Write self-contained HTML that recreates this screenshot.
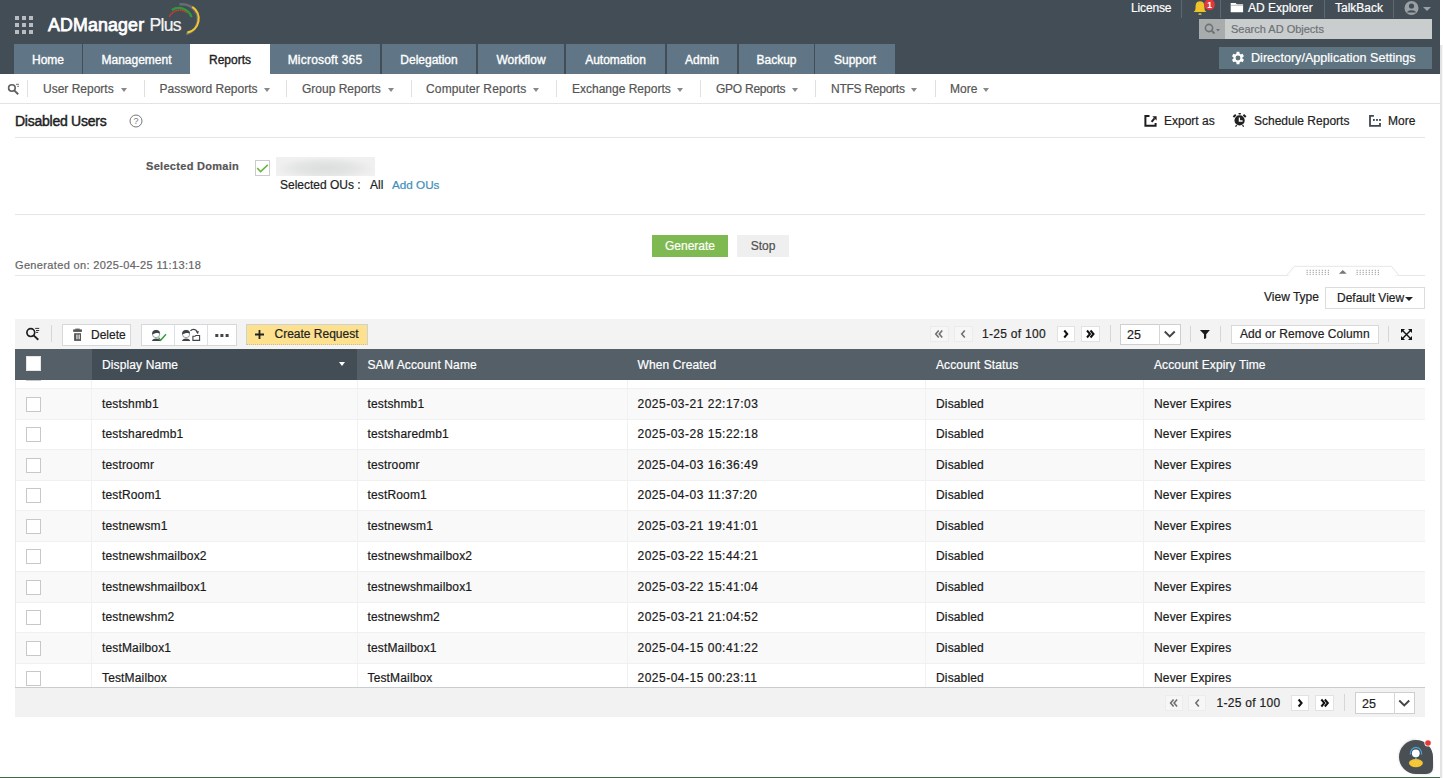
<!DOCTYPE html>
<html><head><meta charset="utf-8">
<style>
*{box-sizing:border-box;margin:0;padding:0}
html,body{width:1443px;height:778px;overflow:hidden;background:#fff;font-family:"Liberation Sans",sans-serif;font-size:12px;color:#222;-webkit-text-stroke-width:0.2px}
.a{position:absolute;white-space:nowrap}
#hdr{position:absolute;left:0;top:0;width:1440px;height:74px;background:#424d56}
.tab{position:absolute;top:44px;height:30px;background:#607686;color:#fff;font-size:12px;line-height:32px;text-align:center;-webkit-text-stroke-width:0.35px}
.tab.sel{background:#fff;color:#222}
.sub{position:absolute;top:74px;left:0;width:1440px;height:30px;border-bottom:1px solid #e3e3e3;background:#fff}
.sn{position:absolute;top:0;line-height:29px;color:#555;font-size:12px}
.car{position:absolute;width:0;height:0;border-left:3px solid transparent;border-right:3px solid transparent;border-top:4px solid #888}
.vsep{position:absolute;width:1px;background:#e0e0e0}
.hl{position:absolute;height:1px;background:#e6e6e6}
.tb{position:absolute;left:15px;top:319px;width:1410px;height:30px;background:#f3f3f3}
.btn{position:absolute;background:#fff;border:1px solid #d9d9d9}
.th{position:absolute;top:349px;height:31px;background:#555f68;color:#fff;line-height:30px;font-size:12px}
.row{position:absolute;left:0;width:1410px;height:30.52px;border-bottom:1px solid #f0f0f0}
.row span{position:absolute;top:0;line-height:30px;font-size:12px;color:#1a1a1a}
.cb{position:absolute;width:15px;height:15px;border:1px solid #c8c8c8;background:#fff}
.pg{position:absolute;width:19px;height:15px;border:1px solid #e3e3e3;background:#fff}
</style></head><body>

<div id="hdr">
  <!-- grid icon -->
  <svg class="a" style="left:15px;top:16px" width="19" height="19" viewBox="0 0 19 19">
    <g fill="#b9bdc0">
      <rect x="0" y="0" width="4" height="4"/><rect x="7" y="0" width="4" height="4"/><rect x="14" y="0" width="4" height="4"/>
      <rect x="0" y="7" width="4" height="4"/><rect x="7" y="7" width="4" height="4"/><rect x="14" y="7" width="4" height="4"/>
      <rect x="0" y="14" width="4" height="4"/><rect x="7" y="14" width="4" height="4"/><rect x="14" y="14" width="4" height="4"/>
    </g>
  </svg>
  <div class="a" style="left:48px;top:14px;font-size:17.8px;line-height:22px;color:#fff;-webkit-text-stroke-width:0.75px;letter-spacing:0.15px">ADManager</div>
  <div class="a" style="left:149.5px;top:14px;font-size:17.6px;line-height:22px;color:#f4f4f4;letter-spacing:-0.7px">Plus</div>
  <svg class="a" style="left:0;top:0" width="210" height="40" viewBox="0 0 210 40">
    <path d="M179.5 4.6 A15 15 0 0 1 186 34" fill="none" stroke="#666d73" stroke-width="2.6"/>
    <path d="M192.3 6.8 A14.2 14.2 0 0 1 187.3 32.6" fill="none" stroke="#f2c72c" stroke-width="2.1"/>
    <path d="M171.8 10 A13.5 13.5 0 0 1 191.6 17.2" fill="none" stroke="#2f9a3a" stroke-width="2.2"/>
    <path d="M169.3 16.8 A11.5 11.5 0 0 1 186.8 12.6" fill="none" stroke="#e23a2e" stroke-width="1.4" stroke-dasharray="1.6 0.5"/>
  </svg>

  <!-- top right links -->
  <div class="a" style="left:1131px;top:0;line-height:16px;color:#fff;font-size:12px;letter-spacing:-0.15px">License</div>
  <div class="vsep" style="left:1181px;top:0;height:17.5px;background:#5d6870"></div>
  <svg class="a" style="left:1185px;top:0px" width="35" height="20" viewBox="1185 0 35 20">
    <path d="M1200 1.2 C1196.3 1.2 1195.6 4 1195.6 7 L1195.3 10 L1193.8 11.9 L1206.2 11.9 L1204.7 10 L1204.4 7 C1204.4 4 1203.7 1.2 1200 1.2Z" fill="#efc42a"/>
    <rect x="1198.6" y="13.2" width="2.8" height="1.8" fill="#c9b03a"/>
    <circle cx="1209.5" cy="4.6" r="5.4" fill="#e2373c"/>
    <text x="1209.6" y="8" font-size="8.5" font-weight="bold" text-anchor="middle" fill="#fff" font-family="Liberation Sans">1</text>
  </svg>
  <div class="vsep" style="left:1220px;top:0;height:17.5px;background:#5d6870"></div>
  <svg class="a" style="left:1230px;top:2px" width="14" height="11" viewBox="0 0 14 11">
    <path d="M0.7 1 L5.5 1 L6.8 2.3 L13.1 2.3 L13.1 10.2 L0.7 10.2Z" fill="#fff"/><path d="M0.7 3.3 L13.1 3.3" stroke="#8a9094" stroke-width="0.6"/>
  </svg>
  <div class="a" style="left:1248px;top:0;line-height:16px;color:#fff;font-size:12px">AD Explorer</div>
  <div class="vsep" style="left:1324px;top:0;height:17.5px;background:#5d6870"></div>
  <div class="a" style="left:1335px;top:0;line-height:16px;color:#fff;font-size:12px">TalkBack</div>
  <div class="vsep" style="left:1393px;top:0;height:17.5px;background:#5d6870"></div>
  <svg class="a" style="left:1404px;top:1px" width="28" height="15" viewBox="0 0 28 15">
    <circle cx="7.5" cy="7" r="7" fill="#9aa0a4"/>
    <circle cx="7.5" cy="5" r="2.6" fill="#424d56"/>
    <path d="M3 11.5 C4 8.5 11 8.5 12 11.5 Z" fill="#424d56"/>
    <path d="M19 6 L27 6 L23 10Z" fill="#9aa0a4"/>
  </svg>

  <!-- search -->
  <div class="a" style="left:1199px;top:19px;width:26px;height:20px;background:#a8acad"></div>
  <svg class="a" style="left:1204px;top:23px" width="18" height="12" viewBox="0 0 18 12">
    <circle cx="5" cy="5" r="3.6" fill="none" stroke="#6c7175" stroke-width="1.6"/>
    <path d="M7.6 7.6 L10.5 10.5" stroke="#6c7175" stroke-width="1.8"/>
    <path d="M12 6 L16 6 L14 8.5Z" fill="#6c7175"/>
  </svg>
  <div class="a" style="left:1225px;top:19px;width:207px;height:20px;background:#c9cdcd"></div>
  <div class="a" style="left:1231px;top:19px;line-height:20px;color:#6d7276;font-size:11px">Search AD Objects</div>

  <!-- settings button -->
  <div class="a" style="left:1219px;top:47px;width:213px;height:22px;background:#5f7481"></div>
  <svg class="a" style="left:1231px;top:51px" width="14" height="14" viewBox="2 2 20 20">
    <path fill="#fff" d="M19.4 13a7.5 7.5 0 0 0 0-2l2.1-1.6-2-3.5-2.5 1a7.3 7.3 0 0 0-1.7-1L15 3h-4l-.4 2.9a7.3 7.3 0 0 0-1.7 1l-2.5-1-2 3.5L6.5 11a7.5 7.5 0 0 0 0 2l-2.1 1.6 2 3.5 2.5-1a7.3 7.3 0 0 0 1.7 1L11 21h4l.4-2.9a7.3 7.3 0 0 0 1.7-1l2.5 1 2-3.5zM13 15.5a3.5 3.5 0 1 1 0-7 3.5 3.5 0 0 1 0 7z" transform="translate(-1 0)"/>
  </svg>
  <div class="a" style="left:1251px;top:47px;line-height:22px;color:#fff;font-size:12.6px">Directory/Application Settings</div>

  <!-- tabs -->
  <div class="tab" style="left:14px;width:68px">Home</div>
  <div class="tab" style="left:83px;width:107px">Management</div>
  <div class="tab sel" style="left:190px;width:80px">Reports</div>
  <div class="tab" style="left:270px;width:110px;letter-spacing:0.2px">Microsoft 365</div>
  <div class="tab" style="left:382px;width:94px">Delegation</div>
  <div class="tab" style="left:478px;width:86px">Workflow</div>
  <div class="tab" style="left:566px;width:99px">Automation</div>
  <div class="tab" style="left:667px;width:70px">Admin</div>
  <div class="tab" style="left:739px;width:75px">Backup</div>
  <div class="tab" style="left:815px;width:80px">Support</div>
</div>

<!-- right strip -->
<div class="a" style="left:1440px;top:45px;width:1px;height:733px;background:#e2e2e2"></div>

<!-- sub nav -->
<div class="sub">
  <svg class="a" style="left:0;top:0" width="24" height="30" viewBox="0 74 24 30">
    <circle cx="11.9" cy="88" r="3.3" fill="none" stroke="#5f5f5f" stroke-width="1.6"/>
    <path d="M14.4 90.6 L18.2 94.2" stroke="#5f5f5f" stroke-width="1.9"/>
    <path d="M16 84.3 L19 84.3 M17.2 86.3 L19 86.3" stroke="#5f5f5f" stroke-width="0.9"/>
  </svg>
</div>
<div class="vsep" style="left:27px;top:80px;height:17px"></div>
<div class="sn" style="left:43px;top:75px;letter-spacing:0px">User Reports</div>
<div class="car" style="left:121px;top:88px"></div>
<div class="vsep" style="left:143.5px;top:80px;height:17px"></div>
<div class="sn" style="left:159.5px;top:75px;letter-spacing:0px">Password Reports</div>
<div class="car" style="left:263.5px;top:88px"></div>
<div class="vsep" style="left:286px;top:80px;height:17px"></div>
<div class="sn" style="left:302px;top:75px;letter-spacing:0px">Group Reports</div>
<div class="car" style="left:388px;top:88px"></div>
<div class="vsep" style="left:411px;top:80px;height:17px"></div>
<div class="sn" style="left:426px;top:75px;letter-spacing:0.15px">Computer Reports</div>
<div class="car" style="left:533px;top:88px"></div>
<div class="vsep" style="left:556px;top:80px;height:17px"></div>
<div class="sn" style="left:572px;top:75px;letter-spacing:0px">Exchange Reports</div>
<div class="car" style="left:677px;top:88px"></div>
<div class="vsep" style="left:700px;top:80px;height:17px"></div>
<div class="sn" style="left:716px;top:75px;letter-spacing:-0.25px">GPO Reports</div>
<div class="car" style="left:792px;top:88px"></div>
<div class="vsep" style="left:815px;top:80px;height:17px"></div>
<div class="sn" style="left:831px;top:75px;letter-spacing:-0.25px">NTFS Reports</div>
<div class="car" style="left:911px;top:88px"></div>
<div class="vsep" style="left:935px;top:80px;height:17px"></div>
<div class="sn" style="left:950px;top:75px;letter-spacing:0px">More</div>
<div class="car" style="left:983px;top:88px"></div>
<div class="a" style="left:15px;top:111px;font-size:14px;line-height:20px;color:#1e1e1e;-webkit-text-stroke:0.45px #1e1e1e;letter-spacing:-0.25px">Disabled Users</div>
<svg class="a" style="left:129px;top:114px" width="14" height="14" viewBox="0 0 14 14">
<circle cx="7" cy="7" r="6" fill="none" stroke="#777" stroke-width="1"/>
<text x="7" y="10.3" font-size="9" text-anchor="middle" fill="#777" font-family="Liberation Sans">?</text></svg>
<div class="hl" style="left:15px;top:137px;width:1410px"></div>
<svg class="a" style="left:1140px;top:110px" width="20" height="20" viewBox="1140 110 20 20">
<path d="M1149.5 116 L1145.4 116 L1145.4 125.7 L1155.6 125.7 L1155.6 123" fill="none" stroke="#1e1e1e" stroke-width="2"/>
<path d="M1151.6 121.8 L1154.5 118.3" stroke="#1e1e1e" stroke-width="2"/>
<path d="M1152.3 116.2 L1156.6 116.2 L1156.6 120.5Z" fill="#1e1e1e"/></svg>
<div class="a" style="left:1164px;top:112px;line-height:18px;font-size:12px;color:#222">Export as</div>
<svg class="a" style="left:1228px;top:108px" width="24" height="24" viewBox="1228 108 24 24">
<circle cx="1239.6" cy="120.4" r="5.1" fill="#222"/>
<rect x="1238.4" y="113" width="2.6" height="1.5" rx="0.7" fill="#222"/>
<path d="M1233.4 117 L1235.8 114.8 M1245.8 117 L1243.4 114.8" stroke="#222" stroke-width="2"/>
<path d="M1236.6 125 L1235.6 126.8 M1242.6 125 L1243.6 126.8" stroke="#222" stroke-width="1.3"/>
<path d="M1239.4 117.5 L1239.4 121 L1242.6 121" stroke="#fff" stroke-width="1.3" fill="none"/></svg>
<div class="a" style="left:1254px;top:112px;line-height:18px;font-size:12px;color:#222">Schedule Reports</div>
<svg class="a" style="left:1363px;top:110px" width="24" height="22" viewBox="1363 110 24 22">
<path d="M1373.9 115.9 L1370 115.9 L1370 125.9 L1380 125.9 L1380 123" fill="none" stroke="#3d4850" stroke-width="1.8"/>
<rect x="1373" y="119" width="1.8" height="1.9" fill="#3d4850"/><rect x="1376.1" y="119" width="1.8" height="1.9" fill="#3d4850"/><rect x="1379.1" y="119" width="1.8" height="1.9" fill="#3d4850"/></svg>
<div class="a" style="left:1388px;top:112px;line-height:18px;font-size:12px;color:#222">More</div>
<div class="a" style="left:146px;top:158px;line-height:16px;font-size:11px;font-weight:bold;color:#555;letter-spacing:0.3px">Selected Domain</div>
<div class="a" style="left:255px;top:160.3px;width:15.2px;height:15.3px;border:1px solid #c9cbcd;background:#fff"></div>
<svg class="a" style="left:250px;top:155px" width="25" height="25" viewBox="250 155 25 25"><path d="M257.2 168.1 L260.6 171.6 L267.8 164.9" fill="none" stroke="#6ab43e" stroke-width="1.5"/></svg>
<div class="a" style="left:276px;top:157.2px;width:99px;height:18.8px;background:radial-gradient(ellipse 50% 60% at 50% 60%, #dcdddd 0%, #e3e4e4 55%, #f0f0f0 100%)"></div>
<div class="a" style="left:280px;top:177px;line-height:16px;font-size:12px;color:#222">Selected OUs :</div>
<div class="a" style="left:370px;top:177px;line-height:16px;font-size:12px;color:#222">All</div>
<div class="a" style="left:392px;top:177px;line-height:16px;font-size:11.7px;color:#3d8fba">Add OUs</div>
<div class="hl" style="left:15px;top:214px;width:1410px"></div>
<div class="a" style="left:652px;top:235px;width:76px;height:22px;background:#7fb951;color:#fff;font-size:12px;line-height:22px;text-align:center">Generate</div>
<div class="a" style="left:737px;top:235px;width:52px;height:22px;background:#efefef;color:#505050;font-size:12px;line-height:22px;text-align:center">Stop</div>
<div class="a" style="left:15px;top:257px;line-height:16px;font-size:11px;color:#666;letter-spacing:0.35px">Generated on: 2025-04-25 11:13:18</div>
<div class="hl" style="left:15px;top:275px;width:1410px"></div>
<svg class="a" style="left:1280px;top:262px" width="125" height="16" viewBox="1280 262 125 16">
<path d="M1286.5 275.5 L1294.5 266.3 L1391.5 266.3 L1399 275.5" fill="#fff" stroke="#e6e6e6" stroke-width="1"/>
<rect x="1290" y="273" width="105" height="3.2" fill="#fff"/>
<g fill="#9a9a9a"><rect x="1306.60" y="269.8" width="1.1" height="1.1"/><rect x="1306.60" y="271.8" width="1.1" height="1.1"/><rect x="1306.60" y="273.8" width="1.1" height="1.1"/><rect x="1309.63" y="269.8" width="1.1" height="1.1"/><rect x="1309.63" y="271.8" width="1.1" height="1.1"/><rect x="1309.63" y="273.8" width="1.1" height="1.1"/><rect x="1312.66" y="269.8" width="1.1" height="1.1"/><rect x="1312.66" y="271.8" width="1.1" height="1.1"/><rect x="1312.66" y="273.8" width="1.1" height="1.1"/><rect x="1315.69" y="269.8" width="1.1" height="1.1"/><rect x="1315.69" y="271.8" width="1.1" height="1.1"/><rect x="1315.69" y="273.8" width="1.1" height="1.1"/><rect x="1318.72" y="269.8" width="1.1" height="1.1"/><rect x="1318.72" y="271.8" width="1.1" height="1.1"/><rect x="1318.72" y="273.8" width="1.1" height="1.1"/><rect x="1321.75" y="269.8" width="1.1" height="1.1"/><rect x="1321.75" y="271.8" width="1.1" height="1.1"/><rect x="1321.75" y="273.8" width="1.1" height="1.1"/><rect x="1324.78" y="269.8" width="1.1" height="1.1"/><rect x="1324.78" y="271.8" width="1.1" height="1.1"/><rect x="1324.78" y="273.8" width="1.1" height="1.1"/><rect x="1327.81" y="269.8" width="1.1" height="1.1"/><rect x="1327.81" y="271.8" width="1.1" height="1.1"/><rect x="1327.81" y="273.8" width="1.1" height="1.1"/><rect x="1356.60" y="269.8" width="1.1" height="1.1"/><rect x="1356.60" y="271.8" width="1.1" height="1.1"/><rect x="1356.60" y="273.8" width="1.1" height="1.1"/><rect x="1359.63" y="269.8" width="1.1" height="1.1"/><rect x="1359.63" y="271.8" width="1.1" height="1.1"/><rect x="1359.63" y="273.8" width="1.1" height="1.1"/><rect x="1362.66" y="269.8" width="1.1" height="1.1"/><rect x="1362.66" y="271.8" width="1.1" height="1.1"/><rect x="1362.66" y="273.8" width="1.1" height="1.1"/><rect x="1365.69" y="269.8" width="1.1" height="1.1"/><rect x="1365.69" y="271.8" width="1.1" height="1.1"/><rect x="1365.69" y="273.8" width="1.1" height="1.1"/><rect x="1368.72" y="269.8" width="1.1" height="1.1"/><rect x="1368.72" y="271.8" width="1.1" height="1.1"/><rect x="1368.72" y="273.8" width="1.1" height="1.1"/><rect x="1371.75" y="269.8" width="1.1" height="1.1"/><rect x="1371.75" y="271.8" width="1.1" height="1.1"/><rect x="1371.75" y="273.8" width="1.1" height="1.1"/><rect x="1374.78" y="269.8" width="1.1" height="1.1"/><rect x="1374.78" y="271.8" width="1.1" height="1.1"/><rect x="1374.78" y="273.8" width="1.1" height="1.1"/><rect x="1377.81" y="269.8" width="1.1" height="1.1"/><rect x="1377.81" y="271.8" width="1.1" height="1.1"/><rect x="1377.81" y="273.8" width="1.1" height="1.1"/></g><path d="M1338.9 273.8 L1342.8 270 L1346.7 273.8Z" fill="#777"/></svg>
<div class="a" style="left:1264px;top:289px;line-height:16px;font-size:12px;color:#222">View Type</div>
<div class="a" style="left:1325px;top:287px;width:100px;height:22px;border:1px solid #dcdcdc;background:#fff"></div>
<div class="a" style="left:1337px;top:290px;line-height:16px;font-size:12px;color:#222">Default View</div>
<div class="car" style="left:1405px;top:297px;border-left-width:4.5px;border-right-width:4.5px;border-top:4.5px solid #222"></div>
<div class="tb"></div>
<svg class="a" style="left:20px;top:322px" width="24" height="22" viewBox="20 322 24 22">
<circle cx="30.8" cy="332.6" r="3.9" fill="none" stroke="#1e1e1e" stroke-width="1.7"/>
<path d="M33.6 335.4 L38.3 339.8" stroke="#1e1e1e" stroke-width="1.9"/>
<path d="M35.2 328.4 L39.2 328.4 M36 330.5 L39.2 330.5 M36 332.4 L38.2 332.4" stroke="#1e1e1e" stroke-width="0.9"/></svg>
<div class="vsep" style="left:51px;top:325px;height:17px;background:#d6d6d6"></div>
<div class="btn" style="left:62px;top:324px;width:69px;height:22px;border-color:#d5d9dc"></div>
<svg class="a" style="left:70px;top:326px" width="14" height="16" viewBox="70 326 14 16">
<rect x="73.2" y="329.4" width="8.7" height="2.5" fill="#555"/><rect x="75.3" y="328.6" width="4.4" height="1.2" fill="#555"/>
<rect x="74.1" y="333.2" width="6.9" height="7.7" fill="#555"/>
<rect x="76.4" y="334.6" width="1.1" height="4.6" fill="#fff"/><rect x="78.6" y="334.6" width="1.1" height="4.6" fill="#fff"/></svg>
<div class="a" style="left:91px;top:327px;line-height:16px;font-size:12px;color:#222">Delete</div>
<div class="btn" style="left:140.5px;top:324px;width:96px;height:22px;border-color:#d5d9dc"></div>
<div class="vsep" style="left:173.5px;top:325px;height:20px;background:#dde0e2"></div>
<div class="vsep" style="left:206.5px;top:325px;height:20px;background:#dde0e2"></div>
<svg class="a" style="left:145px;top:324px" width="90" height="22" viewBox="145 324 90 22"><path d="M152.0 341 C152.0 337.6 160.2 337.6 160.2 341Z" fill="#3c444a"/><circle cx="156.1" cy="334" r="3.7" fill="#fff" stroke="#777" stroke-width="0.7"/><path d="M152.29999999999998 334.6 C151.9 331 154.1 330 156.1 330 C158.6 330 160.1 331.5 159.9 333.5 C157.6 332.3 154.6 333 152.29999999999998 334.6Z" fill="#3c444a"/>
<path d="M158.6 337.6 L160.6 340.3 L166 334.2" stroke="#2e9e3a" stroke-width="1.4" fill="none"/>
<path d="M182.0 341 C182.0 337.6 190.2 337.6 190.2 341Z" fill="#3c444a"/><circle cx="186.1" cy="334" r="3.7" fill="#fff" stroke="#777" stroke-width="0.7"/><path d="M182.29999999999998 334.6 C181.9 331 184.1 330 186.1 330 C188.6 330 190.1 331.5 189.9 333.5 C187.6 332.3 184.6 333 182.29999999999998 334.6Z" fill="#3c444a"/>
<path d="M190.5 330.8 C192 328.8 195.5 328.6 197.2 331.6" stroke="#3c444a" stroke-width="1.3" fill="none"/>
<path d="M195.6 331.6 L198.8 331 L198 334.3Z" fill="#3c444a"/>
<path d="M192.9 336.3 L195 336.3 L195.8 335.5 L199.6 335.5 L199.6 340.4 L192.9 340.4Z" fill="none" stroke="#3c444a" stroke-width="1.1"/>
<rect x="215.3" y="334" width="3" height="3" fill="#444"/><rect x="220.4" y="334" width="3" height="3" fill="#444"/><rect x="225.6" y="334" width="3" height="3" fill="#444"/>
</svg>
<div class="a" style="left:245.5px;top:324px;width:122px;height:20.5px;background:#fde18f;border:1px solid #cdd2d7;border-bottom:1px dotted #c8c0a0"></div>
<svg class="a" style="left:255px;top:330px" width="9" height="9" viewBox="0 0 9 9"><path d="M4.5 0 L4.5 9 M0 4.5 L9 4.5" stroke="#222" stroke-width="1.8"/></svg>
<div class="a" style="left:274.5px;top:326px;line-height:16px;font-size:12px;color:#222">Create Request</div>
<div class="a" style="left:930px;top:326px;width:18.5px;height:16px;background:#f6f6f6;border:1px solid #ececec"></div>
<svg class="a" style="left:0;top:0;overflow:visible" width="1" height="1"><path d="M938.75 330.5 L935.75 334 L938.75 337.5 M942.25 330.5 L939.25 334 L942.25 337.5" stroke="#707070" stroke-width="1.6" fill="none"/></svg>
<div class="a" style="left:954px;top:326px;width:18.5px;height:16px;background:#f6f6f6;border:1px solid #ececec"></div>
<svg class="a" style="left:0;top:0;overflow:visible" width="1" height="1"><path d="M964.75 330.5 L961.75 334 L964.75 337.5" stroke="#707070" stroke-width="1.6" fill="none"/></svg>
<div class="a" style="left:1056.5px;top:326px;width:18.5px;height:16px;background:#fff;border:1px solid #e2e2e2"></div>
<svg class="a" style="left:0;top:0;overflow:visible" width="1" height="1"><path d="M1064.25 330.5 L1067.25 334 L1064.25 337.5" stroke="#111" stroke-width="2" fill="none"/></svg>
<div class="a" style="left:1080.5px;top:326px;width:19.0px;height:16px;background:#fff;border:1px solid #e2e2e2"></div>
<svg class="a" style="left:0;top:0;overflow:visible" width="1" height="1"><path d="M1087.0 330.5 L1090.0 334 L1087.0 337.5 M1090.5 330.5 L1093.5 334 L1090.5 337.5" stroke="#111" stroke-width="2" fill="none"/></svg>
<div class="a" style="left:982px;top:326px;line-height:16px;font-size:12px;color:#222;letter-spacing:0.3px">1-25 of 100</div>
<div class="vsep" style="left:1110px;top:325px;height:17px;background:#d6d6d6"></div>
<div class="a" style="left:1120px;top:323.5px;width:60.5px;height:21.0px;background:#fff;border:1px solid #cfcfcf"></div>
<div class="vsep" style="left:1159px;top:323.5px;height:21.0px;background:#d6d6d6"></div>
<div class="a" style="left:1127px;top:323.5px;line-height:23.0px;font-size:12.5px;color:#222">25</div>
<svg class="a" style="left:0;top:0;overflow:visible" width="1" height="1"><path d="M1164.75 331.5 L1169.75 336.5 L1174.75 331.5" stroke="#444" stroke-width="1.9" fill="none"/></svg>
<div class="vsep" style="left:1190px;top:325.5px;height:16px;background:#d6d6d6"></div>
<svg class="a" style="left:1199px;top:329px" width="12" height="11" viewBox="1199 329 12 11"><path d="M1199.9 329.9 L1209.9 329.9 L1206.2 334.3 L1206.2 338.2 L1204 339 L1204 334.3Z" fill="#1a1a1a"/></svg>
<div class="vsep" style="left:1219.5px;top:325.5px;height:16px;background:#d6d6d6"></div>
<div class="btn" style="left:1230.5px;top:324.5px;width:148px;height:19px"></div>
<div class="a" style="left:1240px;top:326px;line-height:16px;font-size:12px;color:#222;letter-spacing:0.08px">Add or Remove Column</div>
<div class="vsep" style="left:1388px;top:325.5px;height:16px;background:#d6d6d6"></div>
<svg class="a" style="left:1400px;top:328px" width="14" height="14" viewBox="1400 328 14 14">
<path d="M1402.5 330.5 L1410.5 338.5 M1410.5 330.5 L1402.5 338.5" stroke="#111" stroke-width="1.4"/>
<path d="M1401 329 L1405 329 L1401 333Z M1412 329 L1408 329 L1412 333Z M1401 340 L1405 340 L1401 336Z M1412 340 L1408 340 L1412 336Z" fill="#111"/></svg>
<div class="a" style="left:15px;top:379.5px;width:1410px;height:308px;background:#fff;overflow:hidden">
<div class="row" style="left:0;top:-20.82px;background:#fff">
<div class="cb" style="left:11px;top:7.5px"></div>
</div>
<div class="row" style="left:0;top:9.70px;background:#f9f9f9">
<div class="cb" style="left:11px;top:7.5px"></div>
<span style="left:87.0px;top:-0.4px;line-height:30.52px;letter-spacing:0.15px">testshmb1</span>
<span style="left:352.5px;top:-0.4px;line-height:30.52px;letter-spacing:0.15px">testshmb1</span>
<span style="left:622.5px;top:-0.4px;line-height:30.52px;letter-spacing:0.5px">2025-03-21 22:17:03</span>
<span style="left:921.0px;top:-0.4px;line-height:30.52px;letter-spacing:0.15px">Disabled</span>
<span style="left:1139.0px;top:-0.4px;line-height:30.52px;letter-spacing:0.15px">Never Expires</span>
</div>
<div class="row" style="left:0;top:40.22px;background:#fff">
<div class="cb" style="left:11px;top:7.5px"></div>
<span style="left:87.0px;top:-0.4px;line-height:30.52px;letter-spacing:0.15px">testsharedmb1</span>
<span style="left:352.5px;top:-0.4px;line-height:30.52px;letter-spacing:0.15px">testsharedmb1</span>
<span style="left:622.5px;top:-0.4px;line-height:30.52px;letter-spacing:0.5px">2025-03-28 15:22:18</span>
<span style="left:921.0px;top:-0.4px;line-height:30.52px;letter-spacing:0.15px">Disabled</span>
<span style="left:1139.0px;top:-0.4px;line-height:30.52px;letter-spacing:0.15px">Never Expires</span>
</div>
<div class="row" style="left:0;top:70.74px;background:#f9f9f9">
<div class="cb" style="left:11px;top:7.5px"></div>
<span style="left:87.0px;top:-0.4px;line-height:30.52px;letter-spacing:0.15px">testroomr</span>
<span style="left:352.5px;top:-0.4px;line-height:30.52px;letter-spacing:0.15px">testroomr</span>
<span style="left:622.5px;top:-0.4px;line-height:30.52px;letter-spacing:0.5px">2025-04-03 16:36:49</span>
<span style="left:921.0px;top:-0.4px;line-height:30.52px;letter-spacing:0.15px">Disabled</span>
<span style="left:1139.0px;top:-0.4px;line-height:30.52px;letter-spacing:0.15px">Never Expires</span>
</div>
<div class="row" style="left:0;top:101.26px;background:#fff">
<div class="cb" style="left:11px;top:7.5px"></div>
<span style="left:87.0px;top:-0.4px;line-height:30.52px;letter-spacing:0.15px">testRoom1</span>
<span style="left:352.5px;top:-0.4px;line-height:30.52px;letter-spacing:0.15px">testRoom1</span>
<span style="left:622.5px;top:-0.4px;line-height:30.52px;letter-spacing:0.5px">2025-04-03 11:37:20</span>
<span style="left:921.0px;top:-0.4px;line-height:30.52px;letter-spacing:0.15px">Disabled</span>
<span style="left:1139.0px;top:-0.4px;line-height:30.52px;letter-spacing:0.15px">Never Expires</span>
</div>
<div class="row" style="left:0;top:131.78px;background:#f9f9f9">
<div class="cb" style="left:11px;top:7.5px"></div>
<span style="left:87.0px;top:-0.4px;line-height:30.52px;letter-spacing:0.15px">testnewsm1</span>
<span style="left:352.5px;top:-0.4px;line-height:30.52px;letter-spacing:0.15px">testnewsm1</span>
<span style="left:622.5px;top:-0.4px;line-height:30.52px;letter-spacing:0.5px">2025-03-21 19:41:01</span>
<span style="left:921.0px;top:-0.4px;line-height:30.52px;letter-spacing:0.15px">Disabled</span>
<span style="left:1139.0px;top:-0.4px;line-height:30.52px;letter-spacing:0.15px">Never Expires</span>
</div>
<div class="row" style="left:0;top:162.30px;background:#fff">
<div class="cb" style="left:11px;top:7.5px"></div>
<span style="left:87.0px;top:-0.4px;line-height:30.52px;letter-spacing:0.15px">testnewshmailbox2</span>
<span style="left:352.5px;top:-0.4px;line-height:30.52px;letter-spacing:0.15px">testnewshmailbox2</span>
<span style="left:622.5px;top:-0.4px;line-height:30.52px;letter-spacing:0.5px">2025-03-22 15:44:21</span>
<span style="left:921.0px;top:-0.4px;line-height:30.52px;letter-spacing:0.15px">Disabled</span>
<span style="left:1139.0px;top:-0.4px;line-height:30.52px;letter-spacing:0.15px">Never Expires</span>
</div>
<div class="row" style="left:0;top:192.82px;background:#f9f9f9">
<div class="cb" style="left:11px;top:7.5px"></div>
<span style="left:87.0px;top:-0.4px;line-height:30.52px;letter-spacing:0.15px">testnewshmailbox1</span>
<span style="left:352.5px;top:-0.4px;line-height:30.52px;letter-spacing:0.15px">testnewshmailbox1</span>
<span style="left:622.5px;top:-0.4px;line-height:30.52px;letter-spacing:0.5px">2025-03-22 15:41:04</span>
<span style="left:921.0px;top:-0.4px;line-height:30.52px;letter-spacing:0.15px">Disabled</span>
<span style="left:1139.0px;top:-0.4px;line-height:30.52px;letter-spacing:0.15px">Never Expires</span>
</div>
<div class="row" style="left:0;top:223.34px;background:#fff">
<div class="cb" style="left:11px;top:7.5px"></div>
<span style="left:87.0px;top:-0.4px;line-height:30.52px;letter-spacing:0.15px">testnewshm2</span>
<span style="left:352.5px;top:-0.4px;line-height:30.52px;letter-spacing:0.15px">testnewshm2</span>
<span style="left:622.5px;top:-0.4px;line-height:30.52px;letter-spacing:0.5px">2025-03-21 21:04:52</span>
<span style="left:921.0px;top:-0.4px;line-height:30.52px;letter-spacing:0.15px">Disabled</span>
<span style="left:1139.0px;top:-0.4px;line-height:30.52px;letter-spacing:0.15px">Never Expires</span>
</div>
<div class="row" style="left:0;top:253.86px;background:#f9f9f9">
<div class="cb" style="left:11px;top:7.5px"></div>
<span style="left:87.0px;top:-0.4px;line-height:30.52px;letter-spacing:0.15px">testMailbox1</span>
<span style="left:352.5px;top:-0.4px;line-height:30.52px;letter-spacing:0.15px">testMailbox1</span>
<span style="left:622.5px;top:-0.4px;line-height:30.52px;letter-spacing:0.5px">2025-04-15 00:41:22</span>
<span style="left:921.0px;top:-0.4px;line-height:30.52px;letter-spacing:0.15px">Disabled</span>
<span style="left:1139.0px;top:-0.4px;line-height:30.52px;letter-spacing:0.15px">Never Expires</span>
</div>
<div class="row" style="left:0;top:284.38px;background:#fff">
<div class="cb" style="left:11px;top:7.5px"></div>
<span style="left:87.0px;top:-0.4px;line-height:30.52px;letter-spacing:0.15px">TestMailbox</span>
<span style="left:352.5px;top:-0.4px;line-height:30.52px;letter-spacing:0.15px">TestMailbox</span>
<span style="left:622.5px;top:-0.4px;line-height:30.52px;letter-spacing:0.5px">2025-04-15 00:23:11</span>
<span style="left:921.0px;top:-0.4px;line-height:30.52px;letter-spacing:0.15px">Disabled</span>
<span style="left:1139.0px;top:-0.4px;line-height:30.52px;letter-spacing:0.15px">Never Expires</span>
</div>
<div class="a" style="left:76.0px;top:0;width:1px;height:308px;background:#f1f1f1"></div>
<div class="a" style="left:341.5px;top:0;width:1px;height:308px;background:#f1f1f1"></div>
<div class="a" style="left:611.5px;top:0;width:1px;height:308px;background:#f1f1f1"></div>
<div class="a" style="left:910.0px;top:0;width:1px;height:308px;background:#f1f1f1"></div>
<div class="a" style="left:1128.0px;top:0;width:1px;height:308px;background:#f1f1f1"></div>
<div class="a" style="left:0;top:0;width:1px;height:308px;background:#e9e9e9"></div>
</div>
<div class="th" style="left:15px;width:76.5px"></div>
<div class="a" style="left:25.8px;top:356px;width:15.4px;height:15px;background:#fff;border:1px solid #e6e6e6"></div>
<div class="th" style="left:91.5px;width:265.5px;background:#434d56"></div>
<div class="th" style="left:357px;width:1068px"></div>
<div class="a" style="left:102.0px;top:350px;line-height:30px;font-size:12px;color:#fff;letter-spacing:0.12px">Display Name</div>
<div class="a" style="left:367.5px;top:350px;line-height:30px;font-size:12px;color:#fff;letter-spacing:0.12px">SAM Account Name</div>
<div class="a" style="left:637.5px;top:350px;line-height:30px;font-size:12px;color:#fff;letter-spacing:0.12px">When Created</div>
<div class="a" style="left:936.0px;top:350px;line-height:30px;font-size:12px;color:#fff;letter-spacing:0.12px">Account Status</div>
<div class="a" style="left:1154.0px;top:350px;line-height:30px;font-size:12px;color:#fff;letter-spacing:0.12px">Account Expiry Time</div>
<div class="car" style="left:339px;top:362px;border-left-width:3.5px;border-right-width:3.5px;border-top:4px solid #fff"></div>
<div class="a" style="left:15px;top:687px;width:1410px;height:30px;background:#f2f2f2;border-top:1px solid #c9cdd0"></div>
<div class="a" style="left:1165.2px;top:695px;width:17.799999999999955px;height:16px;background:#f6f6f6;border:1px solid #ececec"></div>
<svg class="a" style="left:0;top:0;overflow:visible" width="1" height="1"><path d="M1173.6 699.5 L1170.6 703 L1173.6 706.5 M1177.1 699.5 L1174.1 703 L1177.1 706.5" stroke="#707070" stroke-width="1.6" fill="none"/></svg>
<div class="a" style="left:1188.2px;top:695px;width:18.299999999999955px;height:16px;background:#f6f6f6;border:1px solid #ececec"></div>
<svg class="a" style="left:0;top:0;overflow:visible" width="1" height="1"><path d="M1198.85 699.5 L1195.85 703 L1198.85 706.5" stroke="#707070" stroke-width="1.6" fill="none"/></svg>
<div class="a" style="left:1291px;top:695px;width:18.200000000000045px;height:16px;background:#fff;border:1px solid #e2e2e2"></div>
<svg class="a" style="left:0;top:0;overflow:visible" width="1" height="1"><path d="M1298.6 699.5 L1301.6 703 L1298.6 706.5" stroke="#111" stroke-width="2" fill="none"/></svg>
<div class="a" style="left:1315px;top:695px;width:18.700000000000045px;height:16px;background:#fff;border:1px solid #e2e2e2"></div>
<svg class="a" style="left:0;top:0;overflow:visible" width="1" height="1"><path d="M1321.35 699.5 L1324.35 703 L1321.35 706.5 M1324.85 699.5 L1327.85 703 L1324.85 706.5" stroke="#111" stroke-width="2" fill="none"/></svg>
<div class="a" style="left:1216.5px;top:695px;line-height:16px;font-size:12px;color:#222;letter-spacing:0.3px">1-25 of 100</div>
<div class="vsep" style="left:1344px;top:694px;height:17px;background:#d6d6d6"></div>
<div class="a" style="left:1355px;top:692px;width:60px;height:22px;background:#fff;border:1px solid #cfcfcf"></div>
<div class="vsep" style="left:1393.5px;top:692px;height:22px;background:#d6d6d6"></div>
<div class="a" style="left:1362px;top:692px;line-height:24px;font-size:12.5px;color:#222">25</div>
<svg class="a" style="left:0;top:0;overflow:visible" width="1" height="1"><path d="M1399.25 700.5 L1404.25 705.5 L1409.25 700.5" stroke="#444" stroke-width="1.9" fill="none"/></svg>
<svg class="a" style="left:1396px;top:737px" width="40" height="40" viewBox="0 0 40 40">
<defs><filter id="sh" x="-30%" y="-30%" width="160%" height="160%"><feGaussianBlur stdDeviation="1.2"/></filter></defs>
<path d="M20 2.5 A17 17 0 1 0 37 20 L37 30 Q37 37 30 37 L20 37" fill="#999" opacity="0.5" filter="url(#sh)"/>
<path d="M20 3 A17 17 0 0 0 20 37 L30 37 Q37 37 37 30 L37 20 A17 17 0 0 0 20 3Z" fill="#4a4f54"/>
<path d="M14.3 17.5 C14.3 8 25.7 8 25.7 17.5" stroke="#4aa3d8" stroke-width="1.3" fill="none"/>
<circle cx="19.8" cy="16.3" r="3.9" fill="#fff"/>
<rect x="19" y="20" width="1.8" height="2.2" fill="#4aa3d8"/>
<ellipse cx="19.9" cy="26.1" rx="7" ry="4.1" fill="#f4c430"/>
<g fill="#fbe9a8"><circle cx="17" cy="24.8" r="0.45"/><circle cx="19.5" cy="24.8" r="0.45"/><circle cx="22" cy="24.8" r="0.45"/><circle cx="16" cy="26.6" r="0.45"/><circle cx="18.5" cy="26.6" r="0.45"/><circle cx="21" cy="26.6" r="0.45"/><circle cx="23.5" cy="26.6" r="0.45"/><circle cx="17.5" cy="28.4" r="0.45"/><circle cx="20.5" cy="28.4" r="0.45"/></g>
<circle cx="32" cy="6" r="3.6" fill="#fff"/><circle cx="32" cy="6" r="2.8" fill="#e53935"/>
</svg>
<div class="a" id="rstrip" style="left:1440.5px;top:45px;width:3px;height:733px;background:#f6f6f6;border-left:1px solid #e4e4e4"></div>
<div class="a" style="left:0;top:777px;width:1440px;height:1px;background:#3d6b45"></div>

</body></html>
